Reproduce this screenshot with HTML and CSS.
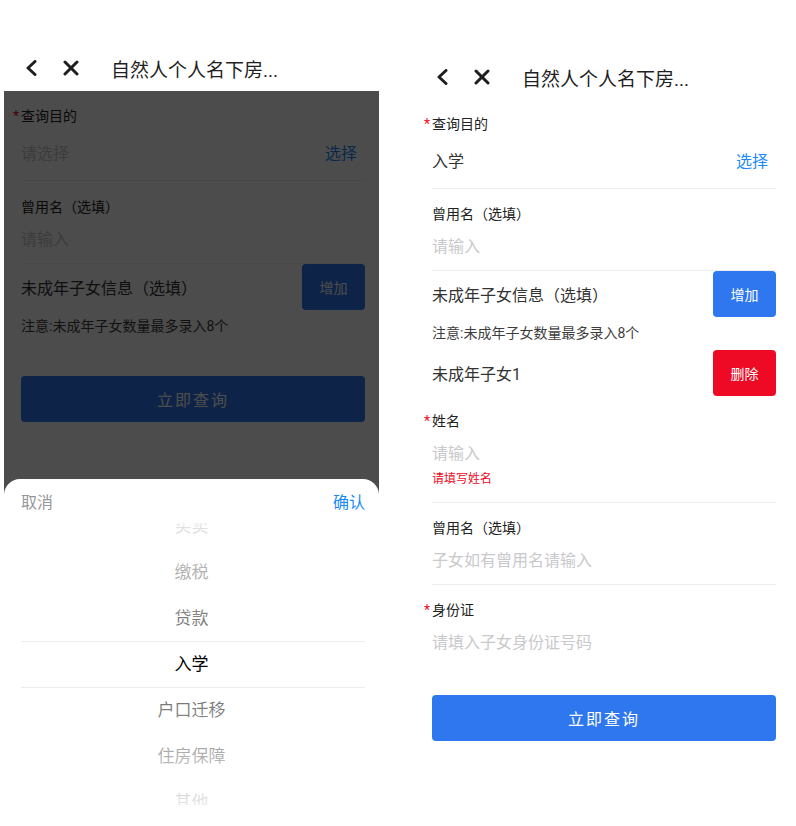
FILE: index.html
```
<!DOCTYPE html>
<html lang="zh-CN">
<head>
  <meta charset="UTF-8" />
  <meta name="viewport" content="width=device-width, initial-scale=1.0"/>
  <title>自然人个人名下房产查询</title>
  <link rel="stylesheet" href="styles.css">
</head>
<body>
<div class="screens">

  <!-- Left screen: picker opened -->
  <div class="phone">
    <header class="navbar">
      <svg class="nav-back" width="12" height="16" viewBox="0 0 12 16"><polyline points="10,1.5 3,8 10,14.5" /></svg>
      <svg class="nav-close" width="16" height="16" viewBox="0 0 16 16"><line x1="2" y1="2" x2="14" y2="14" /><line x1="14" y1="2" x2="2" y2="14" /></svg>
      <div class="nav-title">自然人个人名下房...</div>
    </header>

    <main class="form form--dim">
      <div class="field field--select">
        <div class="field-label required">查询目的</div>
        <div class="field-value">
          <span class="placeholder">请选择</span>
          <span class="link">选择</span>
        </div>
      </div>
      <div class="field">
        <div class="field-label">曾用名（选填）</div>
        <div class="field-input placeholder">请输入</div>
      </div>
      <div class="group-row">
        <span>未成年子女信息（选填）</span>
        <button class="btn btn--small btn--blue">增加</button>
      </div>
      <p class="note note--last">注意:未成年子女数量最多录入8个</p>
      <button class="btn submit">立即查询</button>
    </main>

    <div class="overlay"></div>

    <div class="sheet">
      <div class="sheet-toolbar">
        <span class="sheet-cancel">取消</span>
        <span class="sheet-confirm">确认</span>
      </div>
      <div class="picker">
        <ul class="picker-list">
          <li>买卖</li>
          <li>缴税</li>
          <li>贷款</li>
          <li>入学</li>
          <li>户口迁移</li>
          <li>住房保障</li>
          <li>其他</li>
        </ul>
        <div class="picker-mask"></div>
        <div class="picker-frame"></div>
      </div>
    </div>
  </div>

  <!-- Right screen: filled form -->
  <div class="phone phone--right">
    <header class="navbar">
      <svg class="nav-back" width="12" height="16" viewBox="0 0 12 16"><polyline points="10,1.5 3,8 10,14.5" /></svg>
      <svg class="nav-close" width="16" height="16" viewBox="0 0 16 16"><line x1="2" y1="2" x2="14" y2="14" /><line x1="14" y1="2" x2="2" y2="14" /></svg>
      <div class="nav-title">自然人个人名下房...</div>
    </header>

    <main class="form">
      <div class="field field--select">
        <div class="field-label required">查询目的</div>
        <div class="field-value">
          <span>入学</span>
          <span class="link">选择</span>
        </div>
      </div>
      <div class="field">
        <div class="field-label">曾用名（选填）</div>
        <div class="field-input placeholder">请输入</div>
      </div>
      <div class="group-row">
        <span>未成年子女信息（选填）</span>
        <button class="btn btn--small btn--blue">增加</button>
      </div>
      <p class="note">注意:未成年子女数量最多录入8个</p>
      <div class="group-row">
        <span>未成年子女1</span>
        <button class="btn btn--small btn--red">删除</button>
      </div>
      <div class="field">
        <div class="field-label required">姓名</div>
        <div class="field-input placeholder">请输入</div>
        <div class="field-error">请填写姓名</div>
      </div>
      <div class="field">
        <div class="field-label">曾用名（选填）</div>
        <div class="field-input placeholder">子女如有曾用名请输入</div>
      </div>
      <div class="field field--plain">
        <div class="field-label required">身份证</div>
        <div class="field-input placeholder">请填入子女身份证号码</div>
      </div>
      <button class="btn submit">立即查询</button>
    </main>
  </div>

</div>
</body>
</html>
```

FILE: styles.css
```
* {
  box-sizing: border-box;
}

body {
  margin: 0;
  background: #fff;
  font-family: Roboto, "Noto Sans CJK SC", sans-serif;
  color: #323233;
  overflow: hidden;
}

.screens {
  display: flex;
  gap: 36px;
  padding-left: 4px;
  height: 826px;
}

.phone {
  position: relative;
  width: 375px;
  height: 826px;
  padding-top: 45px;
  overflow: hidden;
}

.phone--right {
  padding-top: 54px;
}

/* nav bar */
.navbar {
  height: 46px;
  display: flex;
  align-items: center;
}

.navbar svg {
  fill: none;
  stroke: #1f1f1f;
  stroke-width: 3;
  stroke-linecap: round;
  stroke-linejoin: round;
}

.nav-back {
  margin-left: 21px;
}

.nav-close {
  margin-left: 26px;
}

.nav-title {
  margin-left: 32px;
  font-size: 19px;
  color: #1f1f1f;
  white-space: nowrap;
}

/* form */
.form {
  padding: 0 14px 0 17px;
}

.field {
  padding: 15px 0 11px;
  border-bottom: 1px solid #ebedf0;
}

.field--select {
  padding-top: 14px;
  padding-bottom: 12px;
}

/* the left capture is a touch taller */
.form--dim .field {
  padding-top: 16px;
}

.form--dim .field--select {
  padding-top: 15px;
}

.field--plain {
  border-bottom-color: transparent;
}

.field-label {
  font-size: 14px;
  line-height: 20px;
  color: #222;
}

.required::before {
  content: "*";
  display: inline-block;
  width: 8px;
  margin-left: -8px;
  color: #ee0a24;
}

.field-input {
  margin-top: 11px;
  font-size: 16px;
  line-height: 24px;
}

.field-value {
  margin-top: 10px;
  height: 32px;
  padding-right: 8px;
  display: flex;
  align-items: center;
  justify-content: space-between;
  font-size: 16px;
}

.placeholder {
  color: #c8c9cc;
}

.link {
  color: #1989fa;
}

.field-error {
  margin-top: 4px;
  margin-bottom: 3px;
  font-size: 12px;
  line-height: 18px;
  color: #ee0a24;
}

.group-row {
  height: 46px;
  display: flex;
  align-items: center;
  justify-content: space-between;
  font-size: 16px;
  color: #333;
}

.note {
  margin: 0;
  padding: 6px 0 7px;
  font-size: 14px;
  line-height: 20px;
  color: #3d3d3d;
}

.note--last {
  padding-bottom: 12px;
}

.btn {
  border: none;
  border-radius: 4px;
  color: #fff;
  font-family: inherit;
  padding: 0;
}

.btn--small {
  width: 63px;
  height: 46px;
  font-size: 14px;
}

.btn--blue {
  background: #2e77ee;
}

.btn--red {
  background: #ee0a24;
}

.submit {
  display: block;
  width: 100%;
  height: 46px;
  margin-top: 28px;
  font-size: 16px;
  letter-spacing: 2px;
  background: #2e77ee;
}

/* dim layer + action sheet */
.overlay {
  position: absolute;
  top: 91px;
  left: 0;
  right: 0;
  bottom: 0;
  background: rgba(0, 0, 0, 0.7);
}

.sheet {
  position: absolute;
  left: 0;
  right: 0;
  bottom: 0;
  height: 347px;
  background: #fff;
  border-radius: 16px 16px 0 0;
}

.sheet-toolbar {
  height: 44px;
  padding: 0 14px 0 17px;
  display: flex;
  align-items: center;
  justify-content: space-between;
  font-size: 16px;
}

.sheet-cancel {
  color: #969799;
}

.sheet-confirm {
  color: #1989fa;
}

.picker {
  position: relative;
  height: 282px;
  overflow: hidden;
}

.picker-list {
  list-style: none;
  margin: -20px 0 0;
  padding: 0;
}

.picker-list li {
  height: 46px;
  line-height: 46px;
  text-align: center;
  font-size: 17px;
  color: #000;
}

.picker-mask {
  position: absolute;
  top: 0;
  left: 0;
  right: 0;
  bottom: 0;
  background-image:
    linear-gradient(180deg, rgba(255, 255, 255, 0.9), rgba(255, 255, 255, 0.4)),
    linear-gradient(0deg, rgba(255, 255, 255, 0.9), rgba(255, 255, 255, 0.4));
  background-position: top, bottom;
  background-size: 100% 118px;
  background-repeat: no-repeat;
}

.picker-frame {
  position: absolute;
  top: 118px;
  left: 17px;
  right: 14px;
  height: 47px;
  border-top: 1px solid #ebedf0;
  border-bottom: 1px solid #ebedf0;
}
```
